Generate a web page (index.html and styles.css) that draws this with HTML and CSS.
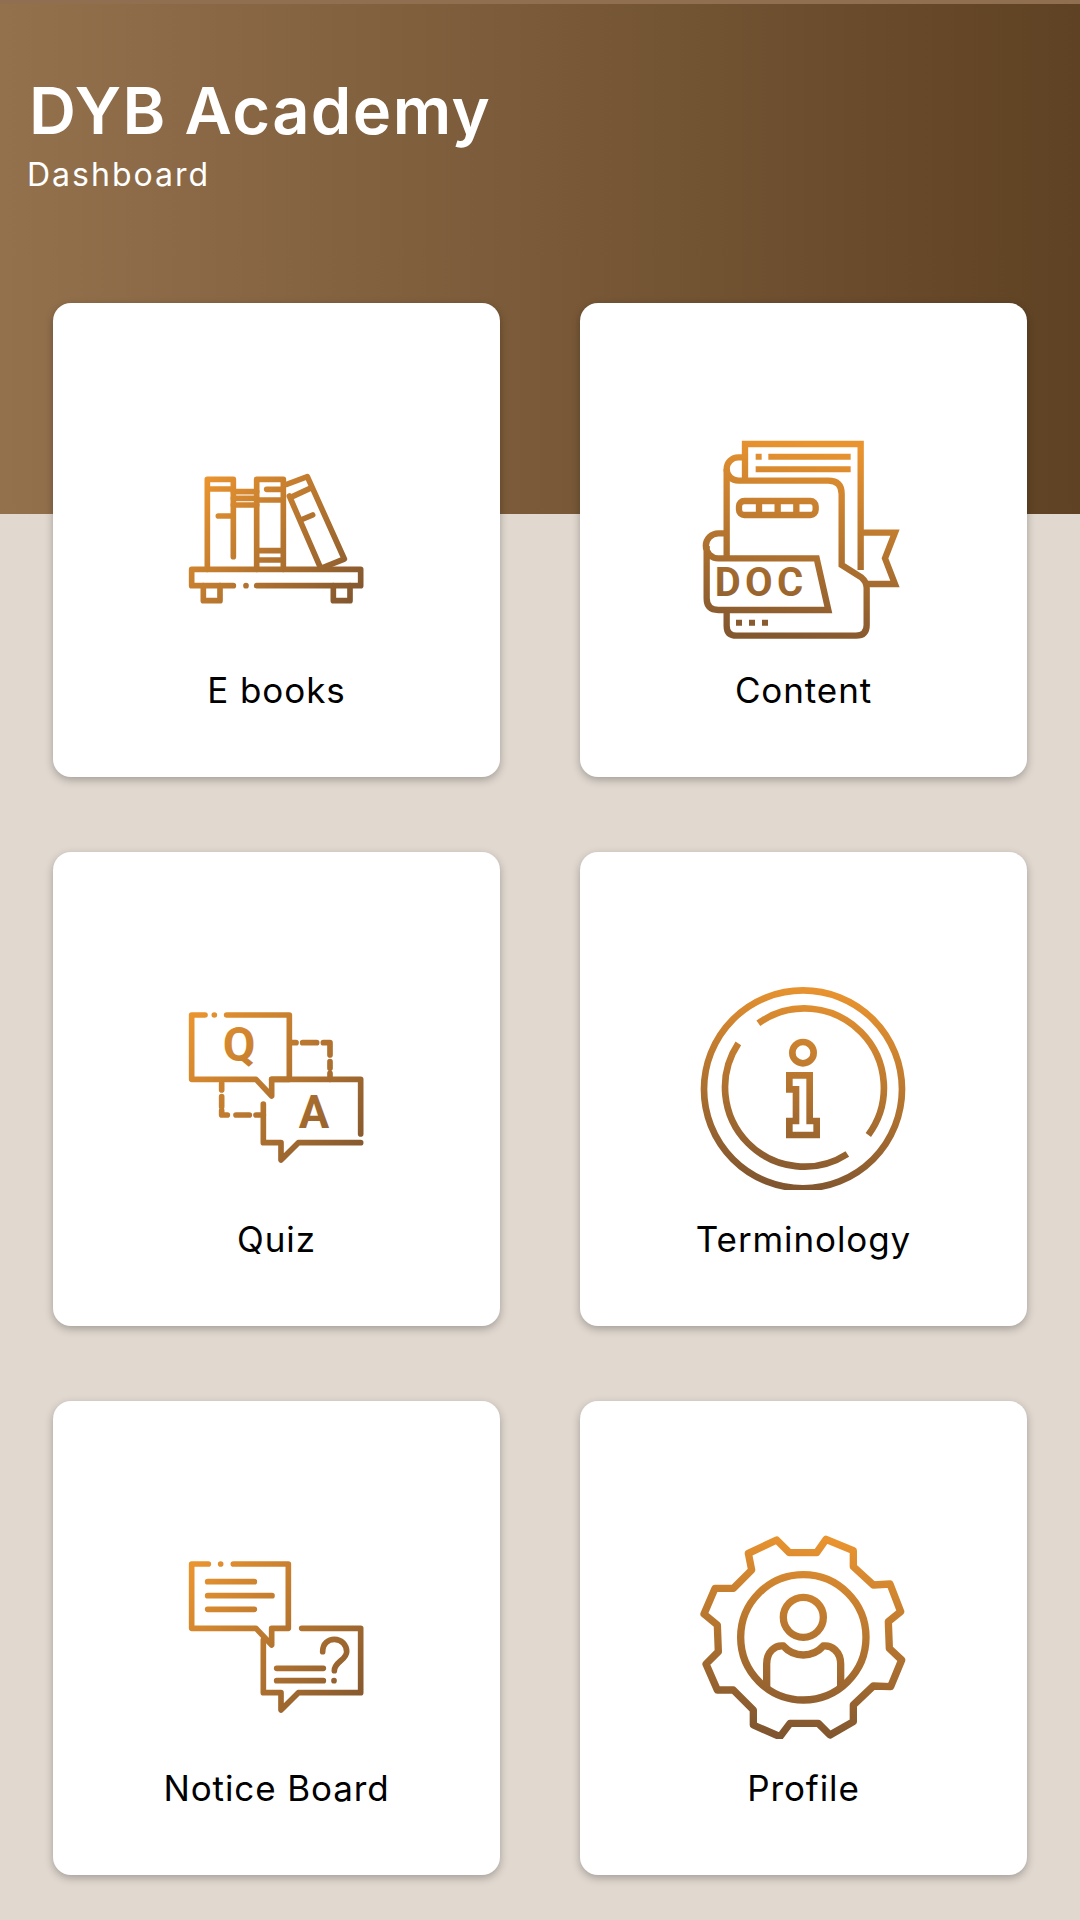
FILE: index.html
```html
<!DOCTYPE html>
<html lang="en">
<head>
    <meta charset="UTF-8">
    <title>Dashboard</title>
    <link rel="stylesheet" href="styles.css">
</head>
<body>
    <section class="top-bar">
        <h1 class="title">DYB Academy</h1>
        <p class="subtitle">Dashboard</p>
    </section>

    <section class="menu-grid">
        <a class="menu-card" href="#">
            <svg class="menu-icon" viewBox="0 -87 639 660">
                <defs><linearGradient id="g1" gradientUnits="userSpaceOnUse" x1="110" y1="80" x2="520" y2="470"><stop offset="0" stop-color="#ea942f"/><stop offset="1" stop-color="#84582f"/></linearGradient></defs>
                <g fill="none" stroke="url(#g1)" stroke-width="17" stroke-linecap="round" stroke-linejoin="round">
                    <path d="M190 407H65V358H572V407H260M228 407h.01"/>
                    <path d="M100 407V452H150V407M490 407V452H540V407"/>
                    <path d="M112 358V88H190V320M112 117H190M145 198H190"/>
                    <path d="M190 125H260M190 145H260M190 165H260"/>
                    <path d="M260 358V88H340V358M290 118H340M260 150H340M260 302H340M260 330H340"/>
                    <path d="M350 103L412 80L523 327L460 352M358 138L450 350M362 142L425 113M392 210L428 195"/>
                </g>
            </svg>
            <span class="menu-label">E books</span>
        </a>
        <a class="menu-card" href="#">
            <svg class="menu-icon" viewBox="0 -27 681 660">
                <defs><linearGradient id="g2" gradientUnits="userSpaceOnUse" x1="380" y1="40" x2="300" y2="620"><stop offset="0" stop-color="#ea942f"/><stop offset="1" stop-color="#84582f"/></linearGradient></defs>
                <g fill="none" stroke="url(#g2)" stroke-width="19">
                    <path d="M165 152V42H512V420"/>
                    <path d="M165 82H145A35 35 0 0 0 145 152H415Q455 152 455 192V405L515 443Q530 455 530 475V585Q530 617 498 617H140Q110 617 110 587V540"/>
                    <path d="M110 117V385"/>
                    <path d="M110 310H85A37 37 0 0 0 85 385H380L415 540H85Q50 540 50 505V348"/>
                    <path d="M515 308H615L585 385L615 462H530"/>
                    <path d="M197 80H215M235 80H482M197 118H482" stroke-width="18"/>
                    <rect x="147" y="213" width="230" height="42" rx="16"/>
                    <path d="M207 213V255M263 213V255M319 213V255"/>
                    <path d="M138 578H156M177 578H195M216 578H234" stroke-width="18"/>
                </g>
                <text class="icon-text doc-text" x="74" y="497" fill="url(#g2)">DOC</text>
            </svg>
            <span class="menu-label">Content</span>
        </a>
        <a class="menu-card" href="#">
            <svg class="menu-icon" viewBox="0 -90 639 660">
                <defs><linearGradient id="g3" gradientUnits="userSpaceOnUse" x1="70" y1="40" x2="560" y2="480"><stop offset="0" stop-color="#ea942f"/><stop offset="1" stop-color="#84582f"/></linearGradient></defs>
                <g fill="none" stroke="url(#g3)" stroke-width="17" stroke-linecap="round" stroke-linejoin="round">
                    <path d="M105 45H65V238H258L305 288V238H358V45H170M133 45h.01"/>
                    <path d="M305 238H572V402M572 428H385L333 480V428H280V312"/>
                    <path d="M365 128H378M398 128H440M460 128H480V165M480 185V205M480 220V238"/>
                    <path d="M155 250V270M155 290V320M155 332V345H172M198 345H238M258 345H280"/>
                </g>
                <text class="icon-text" x="207" y="184" text-anchor="middle" font-size="142" fill="url(#g3)">Q</text>
                <text class="icon-text" x="432" y="385" text-anchor="middle" font-size="136" fill="url(#g3)">A</text>
            </svg>
            <span class="menu-label">Quiz</span>
        </a>
        <a class="menu-card" href="#">
            <svg class="menu-icon" viewBox="0 0 681 660">
                <defs><linearGradient id="g4" gradientUnits="userSpaceOnUse" x1="400" y1="50" x2="300" y2="660"><stop offset="0" stop-color="#ea942f"/><stop offset="1" stop-color="#7f552f"/></linearGradient></defs>
                <g fill="none" stroke="url(#g4)" stroke-width="20">
                    <circle cx="339" cy="358" r="297"/>
                    <path d="M205 160A238 238 0 0 1 535 495M472 552A238 238 0 0 1 145 220"/>
                    <circle cx="339" cy="248" r="32"/>
                    <path d="M298 316H359V453H380V495H298V453H318V358H298Z"/>
                </g>
            </svg>
            <span class="menu-label">Terminology</span>
        </a>
        <a class="menu-card" href="#">
            <svg class="menu-icon" viewBox="0 -93 639 660">
                <defs><linearGradient id="g5" gradientUnits="userSpaceOnUse" x1="70" y1="40" x2="560" y2="480"><stop offset="0" stop-color="#ea942f"/><stop offset="1" stop-color="#84582f"/></linearGradient></defs>
                <g fill="none" stroke="url(#g5)" stroke-width="17" stroke-linecap="round" stroke-linejoin="round">
                    <path d="M115 42H65V235H258L305 285V235H355V42H190M152 42h.01"/>
                    <path d="M113 95H253M113 137H306M113 178H253"/>
                    <path d="M395 235H572V428H385L333 480V428H280V270"/>
                    <path d="M320 355H460M320 392H460"/>
                    <path d="M458 305C458 280 475 268 493 268C515 268 530 285 530 305C530 330 493 335 493 362M492 392h.01"/>
                </g>
            </svg>
            <span class="menu-label">Notice Board</span>
        </a>
        <a class="menu-card" href="#">
            <svg class="menu-icon" viewBox="0 -3 681 660">
                <defs><linearGradient id="g6" gradientUnits="userSpaceOnUse" x1="380" y1="50" x2="300" y2="650"><stop offset="0" stop-color="#ea942f"/><stop offset="1" stop-color="#7f552f"/></linearGradient></defs>
                <g fill="none" stroke="url(#g6)" stroke-width="22" stroke-linejoin="round">
                    <path d="M175 100L260 60L298 98H380L408 58L490 92V140L550 195L600 192L632 275L595 305L598 385L635 420L602 500L550 498L490 555V605L420 645L385 610H300L270 650L190 615V570L130 510H82L48 432L85 395L82 315L42 282L75 205H130L185 150Z"/>
                    <circle cx="340" cy="352" r="188"/>
                    <circle cx="340" cy="292" r="60"/>
                    <path d="M230 505V432C230 395 255 375 280 378C300 400 320 405 340 405C360 405 380 400 400 378C425 375 452 395 452 432V505"/>
                </g>
            </svg>
            <span class="menu-label">Profile</span>
        </a>
    </section>
</body>
</html>
```

FILE: styles.css
```css
* {
    margin: 0;
    padding: 0;
    box-sizing: border-box;
}

a {
    text-decoration: none;
    color: #000;
}

body {
    background-color: #e1d9d0;
    font-family: 'Inter', sans-serif;
}


/* top bar */

.top-bar {
    height: 514px;
    padding: 71px 0 0 27px;
    color: #fff;
    background: linear-gradient(90deg, #94714d, #5f4223);
    border-top: 4px solid #8f6f50;
}

.title {
    font-size: 65px;
    line-height: 72px;
    font-weight: 600;
    letter-spacing: 1.4px;
    margin-left: 2px;
}

.subtitle {
    font-size: 32px;
    line-height: 40px;
    letter-spacing: 2px;
    margin-top: 8px;
}


/* cards */

.menu-grid {
    display: grid;
    grid-template-columns: repeat(2, 447px);
    grid-auto-rows: 474px;
    gap: 75px 80px;
    padding: 0 53px 45px;
    margin-top: -211px;
}

.menu-card {
    display: flex;
    flex-direction: column;
    align-items: center;
    padding-top: 118px;
    background-color: #fff;
    border-radius: 18px;
    box-shadow: 0 3px 8px rgba(0, 0, 0, .28);
}

.menu-icon {
    width: 227px;
    height: 220px;
    display: block;
}

.menu-label {
    margin-top: 26px;
    font-size: 35px;
    line-height: 46px;
    letter-spacing: .9px;
    text-align: center;
}

.icon-text {
    font-family: 'Roboto', sans-serif;
    font-weight: 700;
}

.doc-text {
    font-size: 120px;
    letter-spacing: 13px;
}
```
